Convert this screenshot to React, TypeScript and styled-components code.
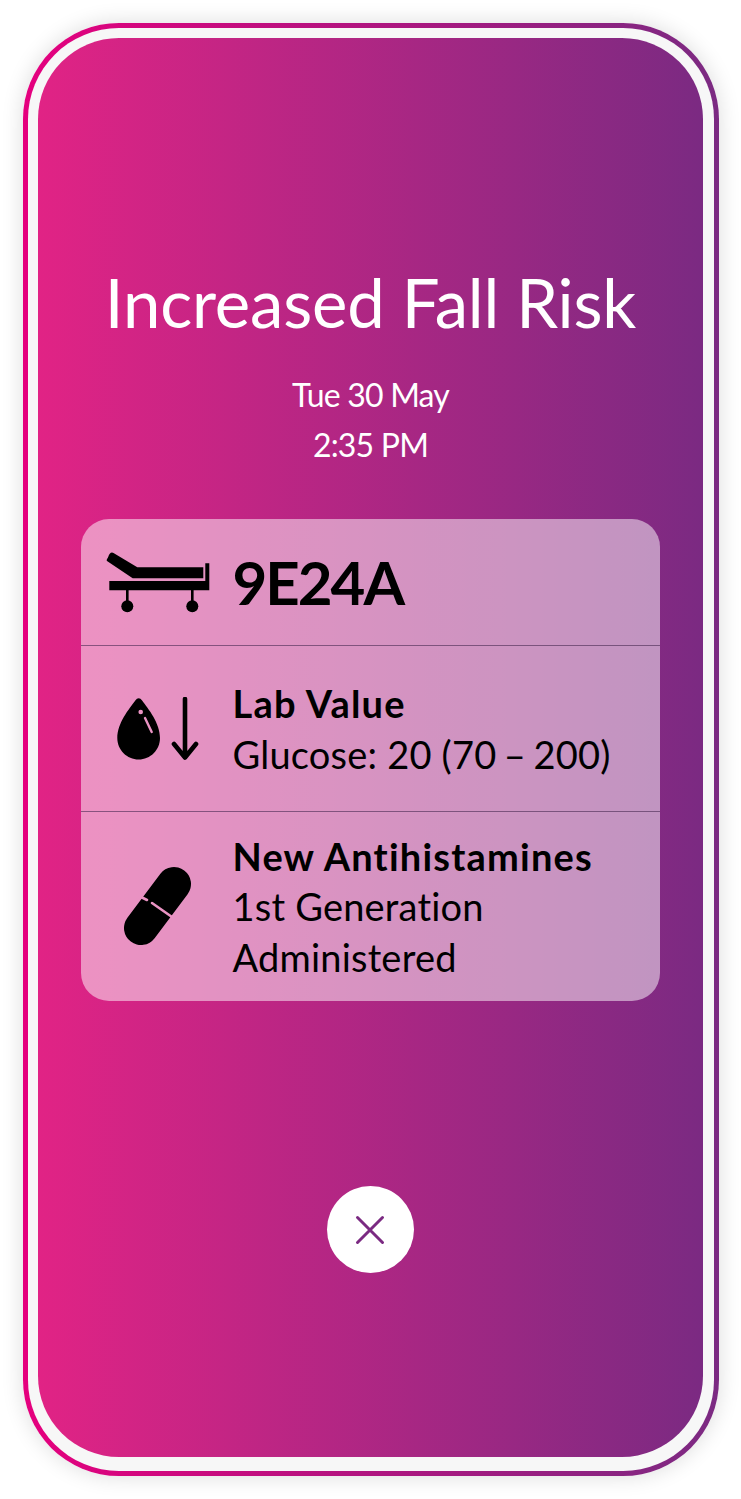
import React from "react";
import styled, { createGlobalStyle } from "styled-components";

const GlobalStyle = createGlobalStyle`
  html, body {
    margin: 0;
    padding: 0;
    background: #fff;
    font-family: "Lato", "Noto Sans", sans-serif;
    font-variant-ligatures: none;
  }
`;

const Page = styled.div`
  width: 741px;
  height: 1499px;
  padding: 23px 22.5px 23px 23px;
  box-sizing: border-box;
  overflow: hidden;
`;

const Frame = styled.div`
  height: 1453px;
  padding: 5px;
  box-sizing: border-box;
  border-radius: 96px;
  background: linear-gradient(90deg, #e5007e 0%, #7b2a82 100%);
  box-shadow: 0 0 22px rgba(0, 0, 0, 0.14);
`;

const Bezel = styled.div`
  height: 100%;
  padding: 10px 10.5px 14px 10px;
  box-sizing: border-box;
  border-radius: 91px;
  background: #f7f7f7;
`;

const Screen = styled.div`
  height: 100%;
  box-sizing: border-box;
  padding-top: 221px;
  border-radius: 81px;
  background: linear-gradient(90deg, #e12385 0%, #7b2a82 100%);
  display: flex;
  flex-direction: column;
  align-items: center;
`;

const Title = styled.h1`
  margin: 0;
  font-size: 67px;
  line-height: 86px;
  font-weight: 400;
  letter-spacing: -0.15px;
  color: #fff;
  white-space: nowrap;
`;

const DateBlock = styled.div`
  margin-top: 25px;
  font-size: 32px;
  line-height: 50px;
  letter-spacing: -0.8px;
  color: #fff;
  text-align: center;
`;

const Card = styled.div`
  width: 579px;
  margin-top: 49px;
  margin-right: 1px;
  border-radius: 28px;
  background: rgba(255, 255, 255, 0.5);
  overflow: hidden;
`;

const Row = styled.div<{ $height: number }>`
  height: ${(p) => p.$height}px;
  display: flex;
  align-items: center;
  box-sizing: border-box;
  border-bottom: 1px solid rgba(70, 40, 80, 0.6);

  &:last-child {
    border-bottom: none;
  }
`;

const IconSlot = styled.div`
  width: 152px;
  padding-left: 2px;
  box-sizing: border-box;
  flex: none;
  display: flex;
  justify-content: center;
`;

const RoomCode = styled.div`
  font-size: 60px;
  font-weight: 700;
  letter-spacing: -2px;
  color: #000;
  line-height: 1;
`;

const Text = styled.div`
  font-size: 38px;
  line-height: 50.5px;
  letter-spacing: 0.2px;
  color: #000;
`;

const Strong = styled.div`
  font-weight: 700;
  letter-spacing: 1.2px;
`;

const Range = styled.span`
  word-spacing: -2.5px;
`;

const CloseButton = styled.button`
  width: 87px;
  height: 87px;
  margin-top: 185px;
  margin-right: 1px;
  padding: 0;
  border: none;
  border-radius: 50%;
  background: #fff;
  display: flex;
  align-items: center;
  justify-content: center;
`;

const BedIcon = () => (
  <svg width="104" height="63" viewBox="0 0 104 63">
    <path
      d="M2 6.5 Q4 0.2 7.5 2 L31.3 16.3 H97.3 V27.3 H26.7 L1 10 Q0 9 2 6.5 Z"
      fill="#000"
    />
    <path d="M3.3 30 H99.3 V12.3 H103.3 V39.3 H3.3 Z" fill="#000" />
    <rect x="20" y="39" width="2.6" height="14" fill="#000" />
    <rect x="85" y="39" width="2.6" height="14" fill="#000" />
    <circle cx="21.3" cy="55.3" r="6" fill="#000" />
    <circle cx="86.3" cy="55.3" r="6" fill="#000" />
  </svg>
);

const DropIcon = () => (
  <svg width="82" height="64" viewBox="0 0 82 64">
    <path
      d="M21.7 1.3 Q19.8 1.3 18.5 3.2 C12 12 0.3 26 0.3 41 C0.3 53 10 62.5 21.7 62.5 C33.4 62.5 43 53 43 41 C43 26 31.4 12 24.9 3.2 Q23.6 1.3 21.7 1.3 Z"
      fill="#000"
    />
    <circle cx="23.7" cy="15" r="2.3" fill="#ea93c3" />
    <path d="M28 21 L34.7 35" stroke="#ea93c3" strokeWidth="2.4" strokeLinecap="round" />
    <path
      d="M68 2 V60 M57 47 L68 60.5 L79 47"
      fill="none"
      stroke="#000"
      strokeWidth="4.6"
      strokeLinecap="round"
      strokeLinejoin="round"
    />
  </svg>
);

const PillIcon = () => (
  <svg width="70" height="82" viewBox="0 0 70 82">
    <path d="M51 18 L18 62" stroke="#000" strokeWidth="34" strokeLinecap="round" />
    <path
      d="M18 31 L24 34 M29 37 L49 51"
      stroke="#ea93c3"
      strokeWidth="2.6"
      strokeLinecap="round"
    />
  </svg>
);

const CloseIcon = () => (
  <svg width="30" height="30" viewBox="0 0 30 30">
    <path
      d="M2.5 2.5 L27.5 27.5 M27.5 2.5 L2.5 27.5"
      stroke="#7b2a82"
      strokeWidth="3"
      strokeLinecap="round"
    />
  </svg>
);

const App = () => {
  return (
    <>
      <GlobalStyle />
      <Page>
        <Frame>
          <Bezel>
            <Screen>
              <Title>Increased Fall Risk</Title>
              <DateBlock>
                <div>Tue 30 May</div>
                <div>2:35 PM</div>
              </DateBlock>
              <Card>
                <Row $height={127}>
                  <IconSlot>
                    <BedIcon />
                  </IconSlot>
                  <RoomCode>9E24A</RoomCode>
                </Row>
                <Row $height={166}>
                  <IconSlot>
                    <DropIcon />
                  </IconSlot>
                  <Text>
                    <Strong>Lab Value</Strong>
                    Glucose: 20 <Range>(70 – 200)</Range>
                  </Text>
                </Row>
                <Row $height={189}>
                  <IconSlot>
                    <PillIcon />
                  </IconSlot>
                  <Text>
                    <Strong>New Antihistamines</Strong>
                    1st Generation
                    <br />
                    Administered
                  </Text>
                </Row>
              </Card>
              <CloseButton aria-label="Close">
                <CloseIcon />
              </CloseButton>
            </Screen>
          </Bezel>
        </Frame>
      </Page>
    </>
  );
};

export default App;
